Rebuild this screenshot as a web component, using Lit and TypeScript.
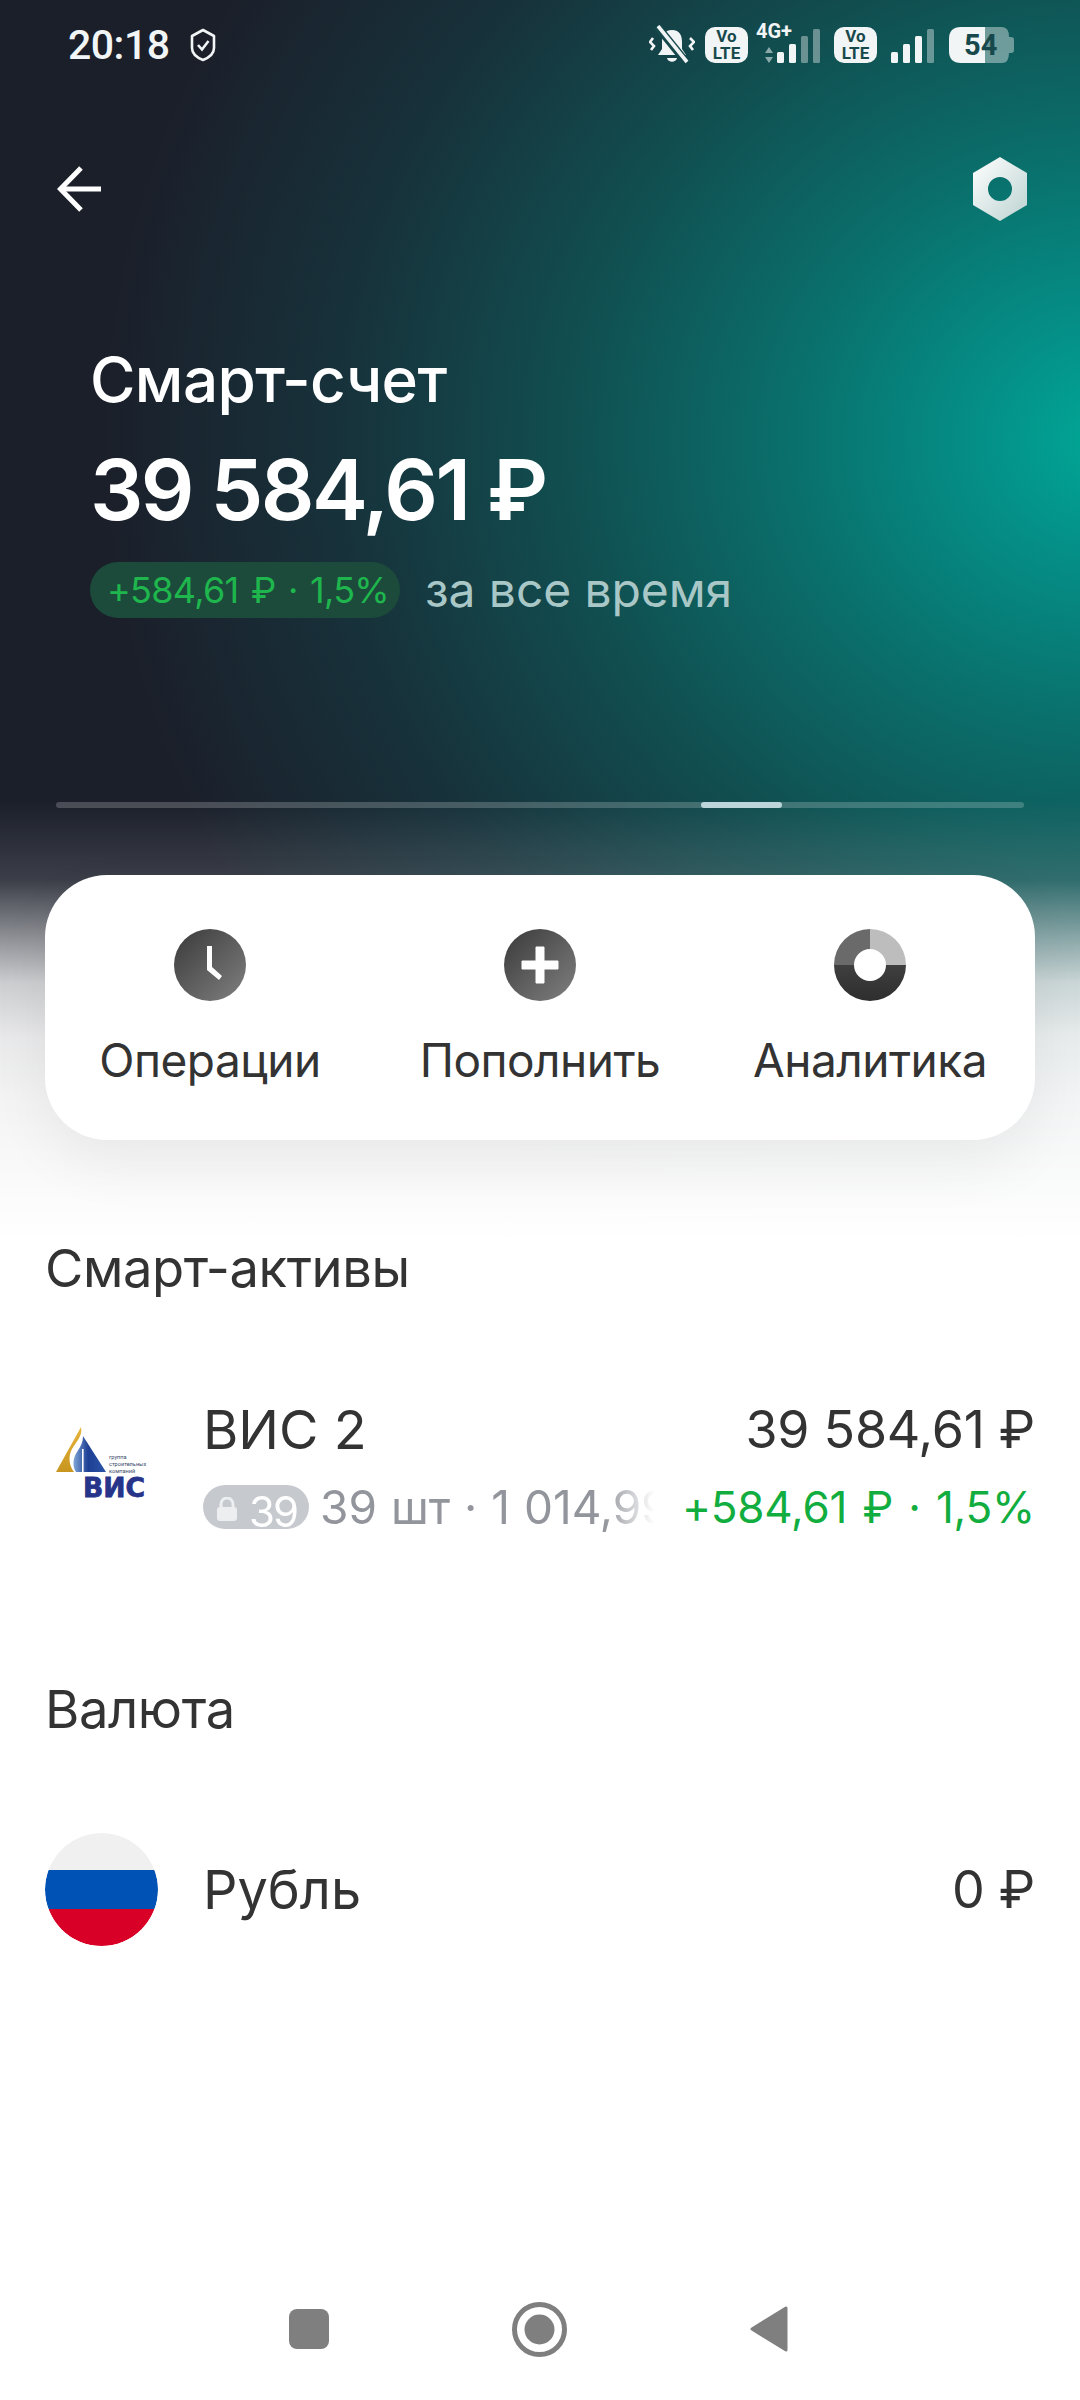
import { LitElement, html, css, svg } from "lit";
import { customElement } from "lit/decorators.js";

const bars = (levels: number[], dim: number) => svg`
  <svg class="bars" width="${levels.length * 12 - 5}" height="36" viewBox="0 0 ${levels.length * 12 - 5} 36">
    ${levels.map((h, i) => svg`<rect x="${i * 12}" y="${36 - h}" width="7" height="${h}" rx="1.5" fill="#f2f5f5" opacity="${i >= levels.length - dim ? 0.4 : 1}"/>`)}
  </svg>`;

@customElement("app-root")
export class AppRoot extends LitElement {
  static styles = css`
    :host { display: block; width: 1080px; height: 2400px; position: relative; overflow: hidden; background: #fff;
      font-family: Inter, "Noto Sans", sans-serif; color: #333; }
    .bg { position: absolute; left: 0; top: 0; width: 1080px; height: 1240px;
      background:
        linear-gradient(to bottom, rgba(255,255,255,0) 0, rgba(255,255,255,0) 800px, rgba(255,255,255,.14) 880px, rgba(255,255,255,.5) 937px, rgba(255,255,255,.78) 983px, rgba(255,255,255,.9) 1037px, rgba(255,255,255,.95) 1100px, #fff 1240px),
        radial-gradient(ellipse 1010px 900px at 1110px 440px, #01a897 0%, #049189 12%, #0a6f6b 32%, #114e50 54%, #17323b 76%, #1b1f2a 100%),
        #1b1f2a; }
    .page { position: relative; display: flex; flex-direction: column; height: 2400px; }
    .status { display: flex; align-items: center; height: 90px; padding: 0 66px 0 68px; color: #f2f5f5; }
    .time { font-family: Roboto, sans-serif; font-size: 41px; font-weight: 500; letter-spacing: -.5px; line-height: 1; }
    .shield { margin-left: 20px; }
    .sys { margin-left: auto; display: flex; align-items: center; }
    .bell { margin-right: 10px; }
    .volte { width: 43px; height: 36px; border-radius: 10px; background: #f2f5f5; color: #17494c; font-family: Roboto, sans-serif;
      font-size: 17px; font-weight: 700; line-height: 17px; text-align: center; display: flex; flex-direction: column; justify-content: center; }
    .net { position: relative; width: 64px; height: 36px; margin: 0 14px 0 8px; display: flex; justify-content: flex-end; align-items: flex-end; }
    .net-label { position: absolute; left: 0; top: -4px; font-family: Roboto, sans-serif; font-weight: 700; font-size: 20px; line-height: 17px; }
    .arrows { position: absolute; left: 8px; bottom: 0; }
    .net2 { margin: 0 15px 0 14px; display: flex; }
    .battery { position: relative; width: 65px; height: 36px; display: flex; align-items: center; }
    .batt-bg { position: absolute; inset: 0; }
    .batt-text { position: relative; width: 100%; padding-left: 15px; color: #17494c; font-family: Roboto, sans-serif; font-weight: 700; font-size: 29px; line-height: 36px; letter-spacing: 0; }

    .top { display: flex; justify-content: space-between; align-items: center; height: 76px; margin-top: 61px; padding: 0 52px 0 57px; }
    .title { margin: 117px 0 0 90px; font-size: 62px; font-weight: 500; line-height: 72px; color: #fff; letter-spacing: -.6px; }
    .amount { margin: 28px 0 0 90px; font-size: 84px; font-weight: 600; line-height: 92px; color: #fff; letter-spacing: -2.6px; }
    .delta { display: flex; align-items: center; margin: 26px 0 0 90px; }
    .delta-pill { height: 56px; width: 310px; box-sizing: border-box; padding-left: 17px; border-radius: 28px; background: #1c4b3b; color: #1eb64d;
      font-size: 36px; line-height: 56px; white-space: nowrap; letter-spacing: -.7px; word-spacing: 3px; }
    .delta-note { margin-left: 25px; font-size: 48px; line-height: 56px; color: #a9c7c6; letter-spacing: -.1px; }
    .track { position: relative; height: 6px; margin: 184px 56px 0; border-radius: 3px; background: rgba(255,255,255,.2); }
    .thumb { position: absolute; left: 645px; top: 0; width: 81px; height: 6px; border-radius: 3px; background: #bcd5d8; }

    .card { display: grid; grid-template-columns: repeat(3, 1fr); height: 265px; margin: 67px 45px 0; border-radius: 62px; background: #fff;
      box-shadow: 0 24px 60px rgba(0,0,0,.06); }
    .action { display: flex; flex-direction: column; align-items: center; padding-top: 54px; }
    .action span { margin-top: 29px; font-size: 46px; line-height: 60px; color: #333; white-space: nowrap; letter-spacing: -.5px; }
    .section { margin: 98px 0 0 45px; font-size: 52.5px; line-height: 60px; color: #333; letter-spacing: -.4px; }
    .section.next { margin-top: 130px; }
    .row { display: flex; align-items: center; padding: 0 45px; }
    .asset { margin-top: 88px; height: 163px; }
    .avatar { width: 113px; height: 113px; flex: none; border-radius: 50%; }
    .info { flex: 1; min-width: 0; margin-left: 45px; }
    .line { display: flex; justify-content: space-between; align-items: center; font-size: 54px; line-height: 64px; color: #333; white-space: nowrap; }
    .val { font-size: 52px; letter-spacing: -.3px; }
    .sub { margin-top: 15px; height: 60px; font-size: 46px; line-height: 60px; }
    .meta { display: flex; align-items: center; width: 456px; overflow: hidden; color: #92959c; white-space: nowrap; word-spacing: 1px;
      -webkit-mask-image: linear-gradient(to right, #000 88%, transparent 99%); mask-image: linear-gradient(to right, #000 88%, transparent 99%); }
    .meta-text { flex: 1; min-width: 0; overflow: hidden; }
    .lock { flex: none; display: flex; align-items: flex-start; gap: 11px; width: 106px; height: 44px; overflow: hidden; box-sizing: border-box; padding: 12px 0 0 13px; margin-right: 11px; border-radius: 22px; background: #c6c9ce; color: #fff; font-size: 42px; line-height: 44px; letter-spacing: -2px; }
    .lock svg { flex: none; }
    .lock span { margin-top: -7px; }
    .gain { color: #12ad3f; font-size: 44px; white-space: nowrap; letter-spacing: -.2px; word-spacing: 3px; }
    .currency { margin-top: 94px; height: 113px; }
    .nav { margin-top: auto; height: 126px; display: flex; align-items: flex-start; padding-top: 27px; box-sizing: border-box; }
    .navrow { display: grid; grid-template-columns: 40px 55px 38px; justify-content: space-between; align-items: center; width: 499px; margin-left: 289px; height: 56px; }
  `;

  render() {
    return html`
      <div class="bg"></div>
      <div class="page">
        <div class="status">
          <span class="time">20:18</span>
          <svg class="shield" width="26" height="34" viewBox="0 0 26 34" fill="none">
            <path d="M13 2 L24 8 V20 C24 26 18 30 13 32 C8 30 2 26 2 20 V8 Z" stroke="#f2f5f5" stroke-width="2.6" stroke-linejoin="round"/>
            <path d="M8 17 L12 21.5 L18.5 13" stroke="#f2f5f5" stroke-width="2.6"/>
          </svg>
          <div class="sys">
            <svg class="bell" width="46" height="40" viewBox="0 0 46 40" fill="none">
              <path d="M23 5 C15 5 13 11 13 17 V24 L9 30 H37 L33 24 V17 C33 11 31 5 23 5 Z" fill="#f2f5f5"/>
              <path d="M18 33 H28 C27 38 19 38 18 33 Z" fill="#f2f5f5"/>
              <path d="M8 1 L37 37" stroke="#14484b" stroke-width="8"/>
              <path d="M9 1 L38 37" stroke="#f2f5f5" stroke-width="3.6"/>
              <path d="M4 13 L1 17 L5 21 L2 25 M41 13 L45 17 L41 21 L44 25" stroke="#f2f5f5" stroke-width="2.6"/>
            </svg>
            <div class="volte"><div>Vo</div><div>LTE</div></div>
            <div class="net">
              <span class="net-label">4G+</span>
              <svg class="arrows" width="10" height="16" viewBox="0 0 10 16"><path d="M5 0 L9 6 H1 Z M5 16 L9 10 H1 Z" fill="#f2f5f5" opacity=".55"/></svg>
              ${bars([11, 19, 27, 34], 2)}
            </div>
            <div class="volte"><div>Vo</div><div>LTE</div></div>
            <div class="net2">${bars([11, 19, 27, 34], 1)}</div>
            <div class="battery">
              <svg class="batt-bg" width="65" height="36" viewBox="0 0 65 36">
                <path d="M36 0 H53 Q60 0 60 10 H62 Q65 10 65 13 V23 Q65 26 62 26 H60 Q60 36 53 36 H36 Z" fill="#f2f5f5" opacity=".42"/>
                <path d="M12 0 H36 V36 H12 Q0 36 0 24 V12 Q0 0 12 0 Z" fill="#f2f5f5"/>
              </svg>
              <span class="batt-text">54</span>
            </div>
          </div>
        </div>
        <div class="top">
          <svg width="46" height="46" viewBox="0 0 46 46" fill="none">
            <path d="M44 23 H4" stroke="#fff" stroke-width="5"/>
            <path d="M24 2 L3.5 23 L24 44" stroke="#fff" stroke-width="5"/>
          </svg>
          <svg width="56" height="64" viewBox="0 0 56 64">
            <defs><linearGradient id="nut" x1="0" y1="0" x2="1" y2="1"><stop offset="0" stop-color="#fff"/><stop offset="1" stop-color="#bcd3d1"/></linearGradient></defs>
            <path fill="url(#nut)" fill-rule="evenodd" d="M28 0 L55 16 V48 L28 64 L1 48 V16 Z M28 20 A12 12 0 1 0 28 44 A12 12 0 1 0 28 20 Z"/>
          </svg>
        </div>
        <div class="title">Смарт-счет</div>
        <div class="amount">39 584,61 ₽</div>
        <div class="delta">
          <span class="delta-pill">+584,61 ₽ · 1,5%</span>
          <span class="delta-note">за все время</span>
        </div>
        <div class="track"><div class="thumb"></div></div>
        <div class="card">
          <div class="action">
            <svg width="72" height="72" viewBox="0 0 72 72">
              <defs><linearGradient id="g1" x1="0" y1="0" x2="1" y2="1"><stop offset="0" stop-color="#3a3a3a"/><stop offset="1" stop-color="#808080"/></linearGradient></defs>
              <circle cx="36" cy="36" r="36" fill="url(#g1)"/>
              <path d="M33 17 H38 V38 L48 47 L45 51 L33 41 Z" fill="#fff"/>
            </svg>
            <span>Операции</span>
          </div>
          <div class="action">
            <svg width="72" height="72" viewBox="0 0 72 72">
              <circle cx="36" cy="36" r="36" fill="url(#g1)"/>
              <path d="M32 18 H40 V32 H54 V40 H40 V54 H32 V40 H18 V32 H32 Z" fill="#fff" stroke="#fff" stroke-width="1" stroke-linejoin="round"/>
            </svg>
            <span>Пополнить</span>
          </div>
          <div class="action">
            <svg width="72" height="72" viewBox="0 0 72 72">
              <defs>
                <linearGradient id="g2" x1="0" y1="0" x2="0" y2="1"><stop offset="0" stop-color="#3f3f3f"/><stop offset="1" stop-color="#2e2e2e"/></linearGradient>
              </defs>
              <path fill-rule="evenodd" fill="#bdbdbd" d="M36 0 A36 36 0 0 1 72 36 H52 A16 16 0 0 0 36 20 Z"/>
              <path fill="#6a6a6a" d="M36 0 V20 A16 16 0 0 0 20 36 H0 A36 36 0 0 1 36 0 Z"/>
              <path fill="url(#g2)" d="M0 36 H20 A16 16 0 0 0 52 36 H72 A36 36 0 0 1 0 36 Z"/>
            </svg>
            <span>Аналитика</span>
          </div>
        </div>
        <div class="section">Смарт-активы</div>
        <div class="row asset">
          <svg class="avatar" viewBox="0 -11 113 113">
            <defs>
              <linearGradient id="gold" x1="0" y1="0" x2="0" y2="1"><stop offset="0" stop-color="#e7b53c"/><stop offset="1" stop-color="#c8951f"/></linearGradient>
              <linearGradient id="blue" x1="0" y1="0" x2="1" y2="0"><stop offset="0" stop-color="#7fa6d8"/><stop offset=".45" stop-color="#1e3f94"/><stop offset="1" stop-color="#2a55a8"/></linearGradient>
            </defs>
            <path d="M36 5 C38 14 31 20 27 27 C23 34 24 44 29 50 H11 Z" fill="url(#gold)"/>
            <path d="M38 14 L61 50 H31 C27 44 28 36 32 30 C36 24 38 20 38 14 Z" fill="url(#blue)"/>
            <rect x="37" y="27" width="1.6" height="23" fill="#fff"/>
            <text x="64" y="37" font-size="5.6" fill="#3a4a6a" font-family="Roboto, sans-serif">группа</text>
            <text x="64" y="44" font-size="5.6" fill="#3a4a6a" font-family="Roboto, sans-serif">строительных</text>
            <text x="64" y="51" font-size="5.6" fill="#3a4a6a" font-family="Roboto, sans-serif">компаний</text>
            <text x="38" y="75" font-size="27" font-weight="900" fill="#26348a" stroke="#26348a" stroke-width=".8" textLength="62" lengthAdjust="spacingAndGlyphs" font-family="'DejaVu Sans', sans-serif">ВИС</text>
          </svg>
          <div class="info">
            <div class="line"><span>ВИС 2</span><span class="val">39 584,61 ₽</span></div>
            <div class="line sub">
              <div class="meta">
                <span class="lock">
                  <svg width="22" height="24" viewBox="0 0 22 24"><path d="M5 11 V7 A6 6 0 0 1 17 7 V11" fill="none" stroke="#eceef0" stroke-width="3"/><rect x="1" y="10" width="20" height="14" rx="3" fill="#eceef0"/></svg>
                  <span>39</span>
                </span>
                <span class="meta-text">39 шт · 1 014,99 ₽</span>
              </div>
              <span class="gain">+584,61 ₽ · 1,5%</span>
            </div>
          </div>
        </div>
        <div class="section next">Валюта</div>
        <div class="row currency">
          <svg class="avatar" viewBox="0 0 113 113">
            <defs><clipPath id="c"><circle cx="56.5" cy="56.5" r="56.5"/></clipPath></defs>
            <g clip-path="url(#c)">
              <rect width="113" height="37" fill="#f0f0f0"/>
              <rect y="37" width="113" height="39" fill="#0052b4"/>
              <rect y="76" width="113" height="37" fill="#d80027"/>
            </g>
          </svg>
          <div class="info"><div class="line"><span>Рубль</span><span class="val">0 ₽</span></div></div>
        </div>
        <div class="nav">
          <div class="navrow">
            <svg width="40" height="40" viewBox="0 0 40 40"><rect width="40" height="40" rx="8" fill="#7f7f7f"/></svg>
            <svg width="55" height="55" viewBox="0 0 55 55"><circle cx="27.5" cy="27.5" r="25" fill="none" stroke="#7f7f7f" stroke-width="5"/><circle cx="27.5" cy="27.5" r="15" fill="#7f7f7f"/></svg>
            <svg width="38" height="46" viewBox="0 0 38 46"><path d="M36 2 V44 L2 23 Z" fill="#7f7f7f" stroke="#7f7f7f" stroke-width="3" stroke-linejoin="round"/></svg>
          </div>
        </div>
      </div>
    `;
  }
}
